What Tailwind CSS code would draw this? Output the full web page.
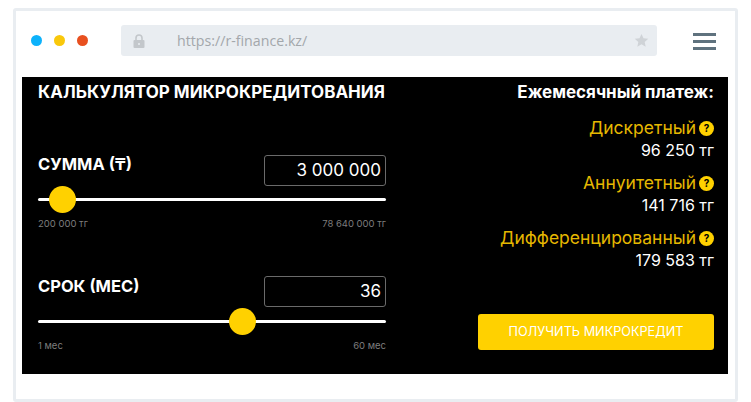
<!DOCTYPE html>
<html lang="ru">
<head>
    <meta charset="UTF-8">
    <title>Калькулятор</title>
    <script src="https://cdn.jsdelivr.net/npm/@tailwindcss/browser@4"></script>
</head>
<body class="bg-white font-['Inter','Noto_Sans',sans-serif]">
<div class="w-[751px] h-[402px] overflow-hidden pt-2 pl-[13px]">
    <div class="w-[725px] h-[394px] border-[3px] border-[#e9edf1] rounded-[3px] px-[6px]">
        <!-- браузер -->
        <div class="h-[66px] flex items-start pt-[14px]">
            <div class="flex items-center gap-[12px] w-[99px] pl-[9px] h-[31px]">
                <span class="w-[11px] h-[11px] rounded-full bg-[#0db2fb]"></span>
                <span class="w-[11px] h-[11px] rounded-full bg-[#f9c80b]"></span>
                <span class="w-[11px] h-[11px] rounded-full bg-[#e8501f]"></span>
            </div>
            <div class="w-[536px] h-[31px] bg-[#e9edf1] rounded-[3px] flex items-center pl-3 pr-2">
                <svg width="12" height="14" viewBox="0 0 12 14" class="shrink-0">
                    <path d="M3 6V4a3 3 0 0 1 6 0v2" fill="none" stroke="#c3c7cb" stroke-width="1.6"/>
                    <rect x="0.5" y="6" width="11" height="8" rx="1" fill="#c3c7cb"/>
                    <circle cx="6" cy="10" r="1" fill="#e9edf1"/>
                </svg>
                <span class="ml-8 text-[14.2px] text-[#a3a7ab] font-['Open_Sans',sans-serif]">https://r-finance.kz/</span>
                <svg width="15" height="15" viewBox="0 0 24 24" class="ml-auto"><path d="M12 1.5l3.2 7 7.6.8-5.7 5.1 1.6 7.5L12 18.1l-6.7 3.8 1.6-7.5L1.2 9.3l7.6-.8z" fill="#cfd3d7"/></svg>
            </div>
            <div class="ml-9 mt-[8px] w-[23px] flex flex-col gap-[4.5px]">
                <span class="h-[2.5px] bg-[#5f727e]"></span>
                <span class="h-[2.5px] bg-[#5f727e]"></span>
                <span class="h-[2.5px] bg-[#5f727e]"></span>
            </div>
        </div>
        <!-- калькулятор -->
        <div class="w-[706px] h-[297px] bg-black text-white flex justify-between pl-4 pr-[14px]">
            <div class="w-[348px]">
                <h2 class="h-[30px] leading-[30px] text-[17px] font-bold whitespace-nowrap">КАЛЬКУЛЯТОР МИКРОКРЕДИТОВАНИЯ</h2>
                <div class="mt-[48px] flex justify-between items-start h-[31px]">
                    <span class="text-[16.5px] font-bold leading-[18px]">СУММА (₸)</span>
                    <div class="w-[122px] h-[31px] border border-[#6a6a6a] rounded-[3px] text-right pr-[4px] text-[17px] leading-[29px]">3 000 000</div>
                </div>
                <div class="relative h-[3px] mt-[12px] bg-white rounded-full">
                    <span class="absolute left-[11px] top-[-12px] w-[27px] h-[27px] rounded-full bg-[#ffd100]"></span>
                </div>
                <div class="mt-[17px] flex justify-between text-[9.5px] leading-[12px] text-[#7d7d7d]"><span>200 000 тг</span><span>78 640 000 тг</span></div>
                <div class="mt-[46px] flex justify-between items-start h-[31px]">
                    <span class="text-[16.5px] font-bold leading-[20px]">СРОК (МЕС)</span>
                    <div class="w-[122px] h-[31px] border border-[#6a6a6a] rounded-[3px] text-right pr-[4px] text-[17px] leading-[29px]">36</div>
                </div>
                <div class="relative h-[3px] mt-[13px] bg-white rounded-full">
                    <span class="absolute left-[191px] top-[-12px] w-[27px] h-[27px] rounded-full bg-[#ffd100]"></span>
                </div>
                <div class="mt-[17px] flex justify-between text-[9.5px] leading-[12px] text-[#7d7d7d]"><span>1 мес</span><span>60 мес</span></div>
            </div>
            <div class="w-[260px] flex flex-col items-end">
                <div class="h-[30px] leading-[30px] text-[17px] font-bold">Ежемесячный платеж:</div>
                <div class="mt-[11px] flex items-center gap-[3px] h-[20px] text-[17.5px] text-[#e6b800]">Дискретный<span class="w-[15px] h-[15px] rounded-full bg-[#ffd100] text-black text-[10px] font-bold leading-[15px] text-center">?</span></div>
                <div class="h-[24px] leading-[24px] text-[16px]">96 250 тг</div>
                <div class="mt-[11px] flex items-center gap-[3px] h-[20px] text-[17.5px] text-[#e6b800]">Аннуитетный<span class="w-[15px] h-[15px] rounded-full bg-[#ffd100] text-black text-[10px] font-bold leading-[15px] text-center">?</span></div>
                <div class="h-[24px] leading-[24px] text-[16px]">141 716 тг</div>
                <div class="mt-[11px] flex items-center gap-[3px] h-[20px] text-[17.5px] text-[#e6b800]">Дифференцированный<span class="w-[15px] h-[15px] rounded-full bg-[#ffd100] text-black text-[10px] font-bold leading-[15px] text-center">?</span></div>
                <div class="h-[24px] leading-[24px] text-[16px]">179 583 тг</div>
                <button class="mt-[42px] w-[236px] h-[36px] bg-[#ffd100] rounded-[3px] text-[12.7px] text-white">ПОЛУЧИТЬ МИКРОКРЕДИТ</button>
            </div>
        </div>
    </div>
</div>
</body>
</html>
